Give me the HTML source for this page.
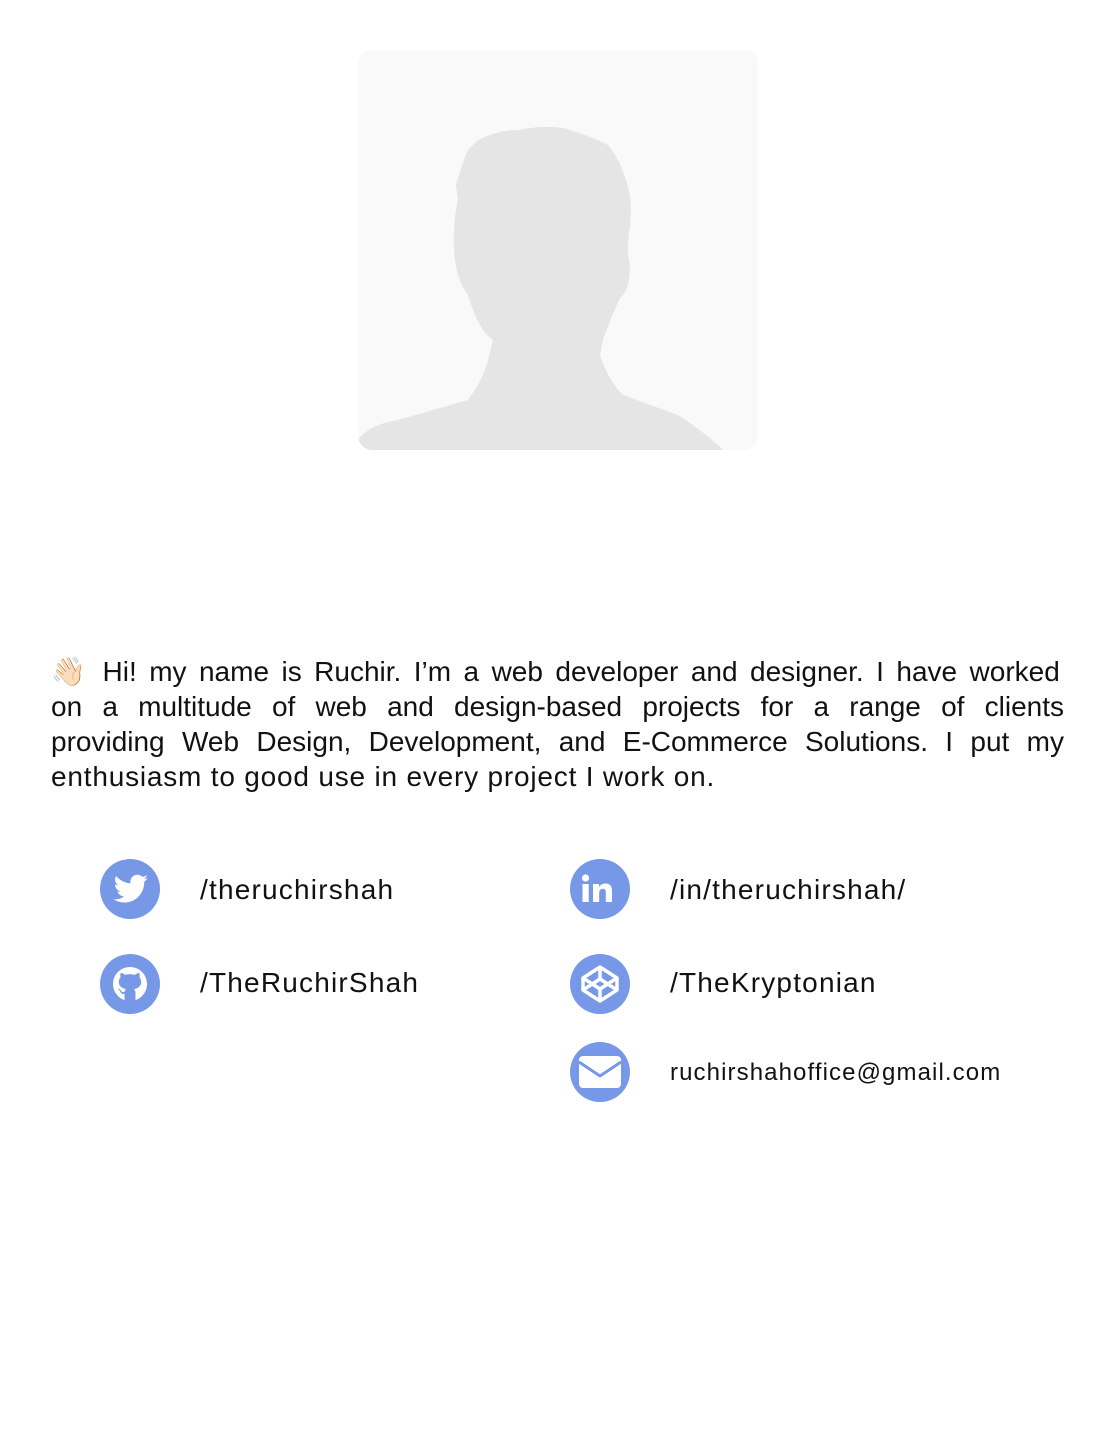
<!DOCTYPE html>
<html><head><meta charset="utf-8"><style>
body{margin:0;background:#fff;width:1115px;height:1443px;position:relative;font-family:"Liberation Sans",sans-serif;color:#111;overflow:hidden}
.photo{position:absolute;left:358px;top:50px;width:400px;height:400px;border-radius:14px;background:#f9f9f9;overflow:hidden}
.p{position:absolute;left:51px;top:654px;width:1013px;margin:0;font-size:28px;line-height:35px}
.p span{display:block;text-align:justify;text-align-last:justify;white-space:nowrap}
.p span.l{text-align-last:left;letter-spacing:0.8px}
.ic{position:absolute;width:60px;height:60px;border-radius:50%;background:#7698e6}
.ic svg{position:absolute;left:0;top:0}
.t{position:absolute;font-size:28px;line-height:34px;letter-spacing:1.2px}
</style></head><body>
<div class="photo"><svg width="400" height="400" viewBox="0 0 400 400">
<path fill="#e5e5e5" d="M0,390 Q10,375 40,370 L110,350 Q125,330 130,310 L135,290 Q120,280 110,245 Q98,230 96,200 Q95,170 100,150 L98,135 Q105,110 110,100 L120,90 Q140,80 160,80 Q185,75 205,78 Q230,85 250,95 Q262,110 268,130 Q275,150 272,175 Q268,200 272,215 Q272,240 262,248 Q250,275 245,290 L242,305 Q250,330 265,345 L320,365 Q350,385 365,400 L0,400 Z"/>
</svg></div>
<div class="p">
<span style="word-spacing:0.5px">👋🏻 Hi! my name is Ruchir. I’m a web developer and designer. I have&nbsp;worked</span>
<span>on a multitude of web and design-based projects for a range of clients</span>
<span>providing Web Design, Development, and E-Commerce Solutions. I put my</span>
<span class="l">enthusiasm to good use in every project I work on.</span>
</div>

<div class="ic" style="left:100px;top:859px"><svg width="60" height="60" viewBox="0 0 60 60"><path fill="#fff" d="M48 19c-1.3.6-2.7 1-4.1 1.1 1.5-.9 2.6-2.3 3.1-3.9-1.4.8-2.9 1.4-4.5 1.7-1.3-1.4-3.1-2.2-5.1-2.2-3.9 0-7 3.1-7 7 0 .5.1 1.1.2 1.6-5.8-.3-11-3.1-14.5-7.3-.6 1-1 2.3-1 3.5 0 2.4 1.2 4.6 3.1 5.8-1.1 0-2.2-.3-3.2-.9v.1c0 3.4 2.4 6.2 5.6 6.9-.6.2-1.2.2-1.8.2-.4 0-.9 0-1.3-.1.9 2.8 3.5 4.8 6.5 4.9-2.4 1.9-5.4 3-8.7 3-.6 0-1.1 0-1.7-.1 3.1 2 6.8 3.2 10.7 3.2 12.9 0 19.9-10.7 19.9-19.9v-.9c1.4-1 2.6-2.2 3.5-3.6z"/></svg></div>
<div class="t" style="left:200px;top:873px">/theruchirshah</div>

<div class="ic" style="left:570px;top:859px"><svg width="60" height="60" viewBox="0 0 60 60"><circle cx="15.5" cy="19" r="3.6" fill="#fff"/><rect x="12.5" y="25" width="6.2" height="18" fill="#fff"/><path fill="#fff" d="M23 25h6v3c1.5-2.3 3.7-3.5 6.5-3.5 5 0 6.5 3.2 6.5 7.5V43h-6.2V33.5c0-2.2-.6-3.8-2.8-3.8-2.3 0-3.8 1.5-3.8 4V43H23z"/></svg></div>
<div class="t" style="left:670px;top:873px">/in/theruchirshah/</div>

<div class="ic" style="left:100px;top:954px"><svg width="60" height="60" viewBox="0 0 60 60"><path fill="#fff" d="M30 13c-9.4 0-17 7.6-17 17 0 7.5 4.9 13.9 11.6 16.1V40c-1.5.1-3.4-.3-4.2-2-.6-1.4-1.4-2.2-2.4-2.7-.7-.4.1-.6.6-.5 1.3.3 2 1.5 2.6 2.3 1 1.2 2.4 1.2 3.4.8.2-1.3.7-2.2 1.5-2.8-4.4-.8-7.3-3-7.3-7.2 0-1.8.6-3.4 1.8-4.6-.3-1-.6-2.6.2-4.3 1.8 0 3.3 1 4.4 1.9 1.6-.5 3.2-.7 4.8-.7s3.2.2 4.8.7c1.1-.9 2.6-1.9 4.4-1.9.8 1.7.5 3.3.2 4.3 1.2 1.2 1.8 2.8 1.8 4.6 0 4.2-2.9 6.4-7.3 7.2 1.1.8 1.6 2.3 1.6 4v7C42.1 43.9 47 37.5 47 30c0-9.4-7.6-17-17-17z"/></svg></div>
<div class="t" style="left:200px;top:966px">/TheRuchirShah</div>

<div class="ic" style="left:570px;top:954px"><svg width="60" height="60" viewBox="0 0 60 60"><g fill="none" stroke="#fff" stroke-width="3.5" stroke-linejoin="round"><path d="M30 13L47 24v12L30 47 13 36V24z"/><path d="M13 24l17 11 17-11M13 36l17-11 17 11M30 13v12M30 35v12"/></g></svg></div>
<div class="t" style="left:670px;top:966px">/TheKryptonian</div>

<div class="ic" style="left:570px;top:1042px"><svg width="60" height="60" viewBox="0 0 60 60"><rect x="9" y="14" width="42" height="32" rx="4" fill="#fff"/><path d="M9 20l21 14 21-14" fill="none" stroke="#7698e6" stroke-width="3"/></svg></div>
<div class="t" style="left:670px;top:1056px;font-size:24px;letter-spacing:1.1px">ruchirshahoffice@gmail.com</div>
</body></html>
